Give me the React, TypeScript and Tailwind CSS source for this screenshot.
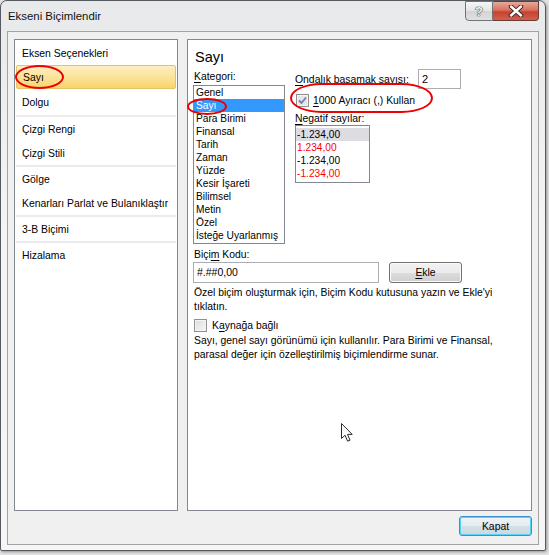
import { useState } from 'react';

const leftGroups: string[][] = [
  ['Eksen Seçenekleri', 'Sayı', 'Dolgu'],
  ['Çizgi Rengi', 'Çizgi Stili'],
  ['Gölge', 'Kenarları Parlat ve Bulanıklaştır'],
  ['3-B Biçimi'],
  ['Hizalama']
];

const categories = [
  'Genel',
  'Sayı',
  'Para Birimi',
  'Finansal',
  'Tarih',
  'Zaman',
  'Yüzde',
  'Kesir İşareti',
  'Bilimsel',
  'Metin',
  'Özel',
  'İsteğe Uyarlanmış'
];

const negatives = [
  { text: '-1.234,00', red: false },
  { text: '1.234,00', red: true },
  { text: '-1.234,00', red: false },
  { text: '-1.234,00', red: true }
];

function CheckBox({ checked }: { checked: boolean }): JSX.Element {
  return (
    <span
      className={`flex h-[13px] w-[13px] shrink-0 items-center justify-center border border-[#8f8f8f] ${
        checked ? 'bg-[#e6e6e6]' : 'bg-[linear-gradient(135deg,#dcdcdc,#f7f7f7)]'
      } shadow-[inset_0_0_0_1px_#f4f4f4]`}
    >
      {checked ? (
        <svg width="9" height="9" viewBox="0 0 9 9">
          <path d="M1 4.5 L3.5 7 L8 1.5" fill="none" stroke="#6b7fa8" strokeWidth="1.8" />
        </svg>
      ) : null}
    </span>
  );
}

export default function App(): JSX.Element {
  const [leftSel, setLeftSel] = useState('Sayı');
  const [category, setCategory] = useState('Sayı');
  const [negIdx, setNegIdx] = useState(0);

  return (
    <div className="relative h-[555px] w-[549px] overflow-hidden bg-[#e3e3e3] font-['Liberation_Sans',Arial,sans-serif] text-[10.4px] text-black">
      <div className="flex h-[551px] w-[546px] flex-col rounded-t-[7px] rounded-b-[2px] border border-[#555a60] bg-[linear-gradient(#e8e9eb,#f4f4f4_40%,#f6f6f6)] shadow-[1px_1px_3px_rgba(0,0,0,0.35)]">
        {/* title bar */}
        <div className="flex h-[30px] shrink-0 items-start">
          <div className="pl-[7px] pt-[8px] text-[11.4px] leading-[14px] text-[#111]">Ekseni Biçimlendir</div>
          <div className="ml-auto mr-[6px] flex">
            <div className="flex h-[20px] w-[28px] items-center justify-center rounded-bl-[4px] border border-[#70757c] bg-[linear-gradient(#f6f6f6,#e4e4e4_50%,#d3d3d3_51%,#e1e1e1)] text-[13px] font-bold leading-none text-[#f2f2f2] [text-shadow:0_0_1px_#444,0_0_1px_#444,0_0_1px_#444]">
              ?
            </div>
            <div className="flex h-[20px] w-[46px] items-center justify-center rounded-br-[4px] border border-l-0 border-[#6b3a33] bg-[linear-gradient(#e9a898,#d8735f_45%,#c8412f_55%,#d2604b)]">
              <svg width="16" height="12" viewBox="0 0 16 12">
                <path d="M3 1.5 L13 10.5 M13 1.5 L3 10.5" stroke="#3b2a28" strokeWidth="4.4" strokeLinecap="round" />
                <path d="M3 1.5 L13 10.5 M13 1.5 L3 10.5" stroke="#ffffff" strokeWidth="2.4" strokeLinecap="round" />
              </svg>
            </div>
          </div>
        </div>

        {/* client area */}
        <div className="mx-[6px] mb-[5px] flex flex-1 flex-col border border-[#a3a3a3] bg-[#f0f0f0] px-[6px] pb-[8px] pt-[7px]">
          <div className="flex h-[472px] gap-[9px]">
            {/* left list */}
            <div className="w-[164px] shrink-0 border border-[#828790] bg-white pt-[1px]">
              {leftGroups.map((group, gi) => (
                <div key={gi}>
                  {gi > 0 ? <div className="mx-[1px] h-[2px] bg-[#ebebef]" /> : null}
                  {group.map((item) => (
                    <button
                      key={item}
                      type="button"
                      onClick={() => setLeftSel(item)}
                      className={`mx-[1px] flex w-[160px] items-center rounded-[2px] pl-[6px] text-left leading-[13px] ${
                        item === 'Dolgu' ? 'h-[26px]' : 'h-[24px]'
                      } ${
                        leftSel === item
                          ? 'border border-[#e5c365] bg-[linear-gradient(#fdefc2,#fce39b_50%,#f8d46a)] pl-[5px]'
                          : ''
                      }`}
                    >
                      {item}
                    </button>
                  ))}
                </div>
              ))}
            </div>

            {/* right panel */}
            <div className="min-w-0 flex-1 border border-[#828790] bg-white">
              <div className="pl-[7px] pt-[8px] text-[14.5px] leading-[18px]">Sayı</div>

              <div className="flex items-start pl-[5px]">
                <div className="w-[92px] shrink-0">
                  <div className="mt-[4px] pl-[1px] leading-[13px]">
                    <u className="underline-offset-2">K</u>ategori:
                  </div>
                  <div className="mt-[2px] h-[159px] border border-[#828790] bg-white">
                    {categories.map((c) => (
                      <div
                        key={c}
                        onClick={() => setCategory(c)}
                        className={`h-[13px] whitespace-nowrap pl-[2px] text-[10.2px] leading-[13px] ${
                          category === c ? 'bg-[#3399ff] text-white' : ''
                        }`}
                      >
                        {c}
                      </div>
                    ))}
                  </div>
                </div>

                <div className="ml-[10px] mt-[3px] w-[166px]">
                  <div className="flex h-[20px] items-center">
                    <span className="w-[123px] leading-[13px]">
                      <u className="underline-offset-2">O</u>ndalık basamak sayısı:
                    </span>
                    <div className="flex h-[20px] w-[43px] items-center border border-[#abadb3] bg-white pl-[3px] text-[11px]">2</div>
                  </div>
                  <div className="mt-[4px] flex h-[14px] items-center gap-[4px] pl-[1px]">
                    <CheckBox checked />
                    <span className="leading-[13px]">
                      <u className="underline-offset-2">1</u>000 Ayıracı (,) Kullan
                    </span>
                  </div>
                  <div className="mt-[5px] h-[13px] leading-[13px]">
                    <u className="underline-offset-2">N</u>egatif sayılar:
                  </div>
                  <div className="h-[58px] w-[75px] border border-[#828790] bg-white pt-[2px]">
                    {negatives.map((n, i) => (
                      <div
                        key={i}
                        onClick={() => setNegIdx(i)}
                        className={`h-[13px] pl-[1px] text-[10.2px] leading-[14px] ${n.red ? 'text-[#ff0000]' : ''} ${
                          negIdx === i ? 'bg-[#dcdce2]' : ''
                        }`}
                      >
                        {n.text}
                      </div>
                    ))}
                  </div>
                </div>
              </div>

              <div className="pl-[5px]">
                <div className="mt-[4px] pl-[1px] leading-[13px]">
                  Biçi<u className="underline-offset-2">m</u> Kodu:
                </div>
                <div className="mt-[1px] flex items-center gap-[10px]">
                  <div className="flex h-[21px] w-[186px] items-center border border-[#abadb3] bg-white pl-[3px] text-[10.5px]">
                    #.##0,00
                  </div>
                  <button
                    type="button"
                    className="h-[21px] w-[73px] rounded-[3px] border border-[#707070] bg-[linear-gradient(#f2f2f2,#ebebeb_50%,#dddddd_51%,#cfcfcf)] leading-[13px] shadow-[inset_0_0_0_1px_#fbfbfb]"
                  >
                    <u className="underline-offset-2">E</u>kle
                  </button>
                </div>
                <div className="mt-[3px] pl-[1px] leading-[14px]">
                  Özel biçim oluşturmak için, Biçim Kodu kutusuna yazın ve Ekle'yi
                  <br />
                  tıklatın.
                </div>
                <div className="mt-[4px] flex h-[14px] items-center gap-[5px] pl-[1px]">
                  <CheckBox checked={false} />
                  <span className="leading-[13px]">
                    K<u className="underline-offset-2">a</u>ynağa bağlı
                  </span>
                </div>
                <div className="mt-[2px] pl-[1px] leading-[13.5px]">
                  Sayı, genel sayı görünümü için kullanılır. Para Birimi ve Finansal,
                  <br />
                  parasal değer için özelleştirilmiş biçimlendirme sunar.
                </div>
              </div>
            </div>
          </div>

          <div className="mt-[5px] flex justify-end">
            <button
              type="button"
              className="h-[20px] w-[73px] rounded-[3px] border border-[#3c8fd0] bg-[linear-gradient(#eef4f8,#e4ecf1_50%,#d5dfe6_51%,#ccd8e0)] leading-[13px] shadow-[inset_0_0_0_1px_#58d2f6]"
            >
              Kapat
            </button>
          </div>
        </div>
      </div>

      {/* red annotation marks */}
      <div className="pointer-events-none absolute left-[15px] top-[65px] h-[24px] w-[49px] rounded-[50%] border-2 border-[#ee0000]" />
      <div className="pointer-events-none absolute left-[187px] top-[98px] h-[17px] w-[40px] rounded-[50%] border-2 border-[#ee0000]" />
      <div className="pointer-events-none absolute left-[290px] top-[83px] h-[30px] w-[143px] rounded-[22%/50%] border-2 border-[#ee0000]" />

      {/* mouse pointer */}
      <svg className="pointer-events-none absolute left-[341px] top-[423px]" width="13" height="20" viewBox="0 0 13 20">
        <path d="M0.5 0.5 L0.5 15.5 L4 12.2 L6.6 18.2 L9 17.2 L6.5 11.4 L11.2 11.4 Z" fill="#ffffff" stroke="#2a2a30" strokeWidth="1" strokeLinejoin="round" />
      </svg>
    </div>
  );
}
